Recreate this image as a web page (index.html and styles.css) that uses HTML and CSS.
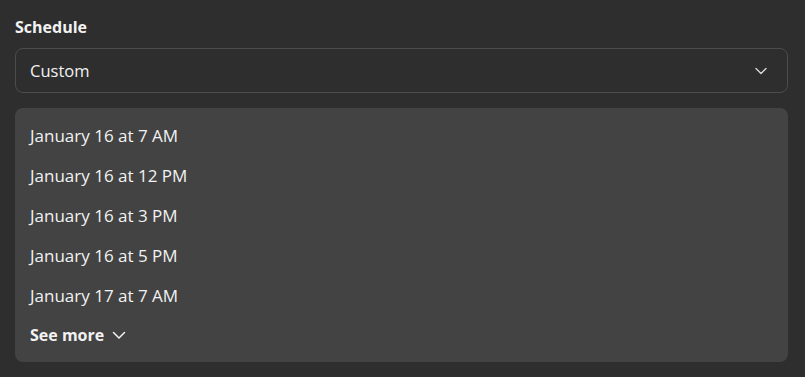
FILE: index.html
```html
<!DOCTYPE html>
<html>
<head>
<meta charset="utf-8">
<link rel="stylesheet" href="styles.css">
</head>
<body>
<div class="page">
  <div class="label">Schedule</div>
  <div class="select">
    <span class="select-value">Custom</span>
    <svg class="chev" width="12" height="8" viewBox="0 0 12 8"><path d="M1 1.5 L6 6.5 L11 1.5" fill="none" stroke="#d6d6d6" stroke-width="1.4" stroke-linecap="round" stroke-linejoin="round"/></svg>
  </div>
  <div class="panel">
    <div class="item">January 16 at 7 AM</div>
    <div class="item">January 16 at 12 PM</div>
    <div class="item">January 16 at 3 PM</div>
    <div class="item">January 16 at 5 PM</div>
    <div class="item">January 17 at 7 AM</div>
    <div class="item more">See more
      <svg class="chev-small" width="14" height="9" viewBox="0 0 14 9"><path d="M1.5 1.5 L7 7 L12.5 1.5" fill="none" stroke="#f2f2f2" stroke-width="1.5" stroke-linecap="round" stroke-linejoin="round"/></svg>
    </div>
  </div>
</div>
</body>
</html>
```
FILE: styles.css
```css
html, body {
  margin: 0;
  background: #2e2e2e;
}
body {
  font-family: "Open Sans", "Noto Sans", sans-serif;
  color: #f2f2f2;
  width: 805px;
  height: 377px;
  overflow: hidden;
}
.page {
  padding: 17px 17px 0 15px;
  display: flex;
  flex-direction: column;
}
.label {
  font-weight: 700;
  font-size: 16px;
  line-height: 20px;
  margin-bottom: 11px;
}
.select {
  height: 43px;
  border: 1px solid #4c4c4c;
  border-radius: 8px;
  display: flex;
  align-items: center;
  justify-content: space-between;
  padding: 0 20px 0 14px;
  font-size: 16.5px;
  margin-bottom: 15px;
}
.chev {
  display: block;
}
.panel {
  background: #434343;
  border-radius: 8px;
  padding: 7px 15px 7px;
}
.item {
  height: 40px;
  display: flex;
  align-items: center;
  font-size: 17px;
}
.more {
  font-weight: 700;
  font-size: 16px;
  gap: 8px;
}
.chev-small {
  display: block;
}
```
